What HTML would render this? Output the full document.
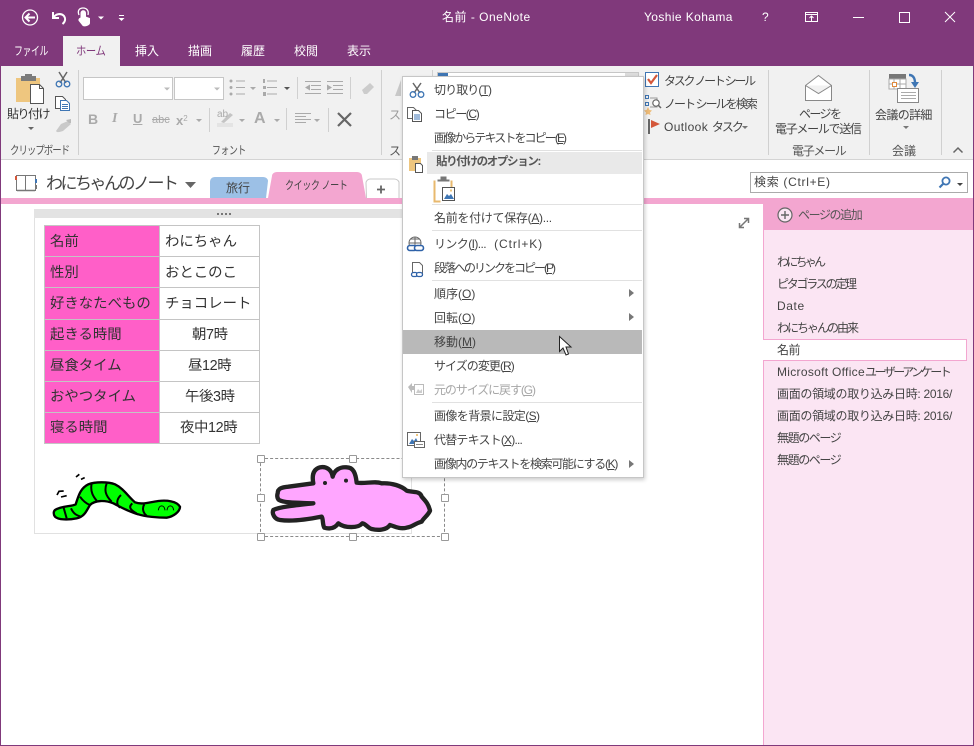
<!DOCTYPE html>
<html lang="ja"><head><meta charset="utf-8"><title>名前 - OneNote</title>
<style>
html,body{margin:0;padding:0;background:#fff}
#app{position:relative;width:974px;height:746px;overflow:hidden;background:#fff;font-family:"Liberation Sans","Noto Sans CJK JP",sans-serif;font-size:12px;color:#444}
.a{position:absolute}
.t{position:absolute;white-space:nowrap;line-height:16px;letter-spacing:-.5px}
.w{color:#fff}
.g{color:#9a9a9a}
.m{position:absolute;left:434px;white-space:nowrap;line-height:16px;color:#444;letter-spacing:-.6px}
.sep{position:absolute;left:432px;width:210px;height:1px;background:#e1e1e1}
.vs{position:absolute;top:70px;height:85px;width:1px;background:#d0d0d0}
.c{position:absolute;font-size:14.4px;line-height:20px;color:#333;white-space:nowrap}
.h{position:absolute;width:6px;height:6px;background:#fff;border:1px solid #999;border-radius:1px}
.p{position:absolute;left:777px;white-space:nowrap;line-height:16px;color:#444;letter-spacing:-.55px}
.sx{transform-origin:0 50%}
svg{position:absolute;overflow:visible}
u{text-decoration:underline}
</style></head><body><div id="app">

<!-- title bar -->
<div class="a" style="left:0;top:0;width:974px;height:66px;background:#80397b"></div>
<div class="a" style="left:0;top:0;width:1px;height:746px;background:#80397b;z-index:5"></div>
<div class="a" style="left:973px;top:0;width:1px;height:746px;background:#80397b;z-index:5"></div>
<div class="a" style="left:0;top:745px;width:974px;height:1px;background:#80397b;z-index:5"></div>

<svg style="left:0;top:0" width="140" height="36" fill="none" stroke="#fff">
<circle cx="30" cy="17.5" r="7.5" stroke-width="1.3"/>
<path d="M35 17.500H26M29.500 13.500L25.500 17.500L29.500 21.500" stroke-width="2"/>
<path d="M53 12V18H59M53.500 17.500C56 13.500 61 13 64 16C66 19 65 22 62.500 24" stroke-width="2"/>
<path d="M81 18V13C81 10 85.500 10 85.500 13V17L89.500 18.500V23C89.500 25 85 26.500 83 25.500L79 20.500C78.500 19 80 18 81 18Z" fill="#fff" stroke-width="1"/>
<path d="M79 15C77 10 80 8 83 8C87 8 89 11 88 15" stroke-width="1.300"/>
<path d="M98 16.500h6l-3 3z" fill="#fff" stroke="none"/>
<path d="M119 15.500h5" stroke-width="1"/><path d="M118.500 18h6l-3 3z" fill="#fff" stroke="none"/>
</svg>

<div class="t w" style="left:442px;top:9px;letter-spacing:.5px">名前 - OneNote</div>
<div class="t w" style="left:644px;top:9px;letter-spacing:.4px">Yoshie Kohama</div>
<div class="t w" style="left:762px;top:9px;letter-spacing:0">?</div>
<svg style="left:800px;top:8px" width="170" height="20" fill="none" stroke="#fff">
<path d="M5.500 4.500h12v9h-12zM5.500 6.500h12M11.500 13v-5M9.500 10l2-2 2 2"/>
<path d="M53 9.500h11"/>
<path d="M99.500 4.500h10v10h-10z"/>
<path d="M145 4l10 10M155 4l-10 10"/>
</svg>

<!-- tabs -->
<div class="a" style="left:63px;top:36px;width:57px;height:30px;background:#f1f1f1"></div>
<div class="t w sx" style="left:14px;top:43px;transform:scaleX(.74)">ファイル</div>
<div class="t sx" style="left:76px;top:43px;color:#80397b;transform:scaleX(.86)">ホーム</div>
<div class="t w" style="left:135px;top:43px;letter-spacing:0">挿入</div>
<div class="t w" style="left:188px;top:43px;letter-spacing:0">描画</div>
<div class="t w" style="left:241px;top:43px;letter-spacing:0">履歴</div>
<div class="t w" style="left:294px;top:43px;letter-spacing:0">校閲</div>
<div class="t w" style="left:347px;top:43px;letter-spacing:0">表示</div>

<!-- ribbon -->
<div class="a" style="left:0;top:66px;width:974px;height:93px;background:#f1f1f1"></div>
<div class="a" style="left:0;top:159px;width:974px;height:1px;background:#d4d4d4"></div>
<div class="vs" style="left:78px"></div>
<div class="vs" style="left:381px"></div>
<div class="vs" style="left:768px"></div>
<div class="vs" style="left:869px"></div>
<div class="vs" style="left:941px"></div>
<div class="vs" style="left:432px"></div>

<svg style="left:0;top:66px" width="400" height="94">
<!-- paste -->
<rect x="16" y="12" width="24" height="24" fill="#eec67f"/>
<rect x="21" y="10" width="15" height="5" fill="#7b7b7b"/>
<rect x="25" y="8" width="7" height="3" fill="#7b7b7b"/>
<path d="M30.500 18.500h9l4 4v15h-13z" fill="#fff" stroke="#555"/>
<path d="M39.500 18.500v4h4" fill="none" stroke="#555"/>
<path d="M28 61h6l-3 3z" fill="#666"/>
<!-- scissors -->
<g fill="none">
<path d="M59 6l7 11M67 6l-7 11" stroke="#666" stroke-width="1.500"/>
<circle cx="59" cy="18" r="2.800" stroke="#3f76b4" stroke-width="1.300"/>
<circle cx="67" cy="18" r="2.800" stroke="#3f76b4" stroke-width="1.300"/>
<!-- copy -->
<path d="M55.500 30.500h7l3 3v9h-10z" fill="#fff" stroke="#555"/>
<path d="M60.500 34.500h6l3 3v7h-9z" fill="#fff" stroke="#3f76b4"/>
<path d="M62 38.500h6M62 40.500h6M62 42.500h6" stroke="#3f76b4"/>
</g>
<!-- brush -->
<path d="M68 55l3 3-8 7c-3 1-6 2-7 0l5-7z" fill="#c9c9c9"/><path d="M66 54l5-1 0 4-2 0z" fill="#bbb"/>
<!-- font combos -->
<rect x="83.500" y="11.500" width="89" height="22" fill="#fff" stroke="#c6c6c6"/>
<rect x="174.500" y="11.500" width="49" height="22" fill="#fff" stroke="#c6c6c6"/>
<path d="M164 21.500h6l-3 3zM214 21.500h6l-3 3z" fill="#bbb"/>
<!-- lists -->
<g fill="#aaa">
<circle cx="231" cy="15" r="1.500"/><circle cx="231" cy="21.500" r="1.500"/><circle cx="231" cy="28" r="1.500"/>
<rect x="236" y="14.500" width="9" height="1"/><rect x="236" y="21" width="9" height="1"/><rect x="236" y="27.500" width="9" height="1"/>
<path d="M250 21h6l-3 3z"/>
<rect x="267" y="14.500" width="10" height="1"/><rect x="267" y="21" width="10" height="1"/><rect x="267" y="27.500" width="10" height="1"/>
<rect x="263" y="13" width="2" height="4"/><rect x="263" y="20" width="3" height="3"/><rect x="263" y="26" width="3" height="4"/>
<path d="M284 21h6l-3 3z" fill="#555"/>
<rect x="297" y="11" width="1" height="22" fill="#d0d0d0"/>
<rect x="350" y="11" width="1" height="22" fill="#d0d0d0"/>
<rect x="305" y="15" width="16" height="1"/><rect x="311" y="19" width="10" height="1"/><rect x="311" y="23" width="10" height="1"/><rect x="305" y="27" width="16" height="1"/>
<path d="M305 21.500l5-3v6z"/>
<rect x="327" y="15" width="16" height="1"/><rect x="333" y="19" width="10" height="1"/><rect x="333" y="23" width="10" height="1"/><rect x="327" y="27" width="16" height="1"/>
<path d="M332 21.500l-5-3v6z"/>
<path d="M362 24l8-7 4 4-7 7h-3z" fill="#ccc"/>
<rect x="209" y="42" width="1" height="24" fill="#d0d0d0"/>
<rect x="286" y="42" width="1" height="22" fill="#d0d0d0"/>
<path d="M196 53h6l-3 3zM239 53h6l-3 3zM274 53h6l-3 3zM314 53h6l-3 3z"/>
<rect x="295" y="47" width="16" height="1"/><rect x="295" y="50" width="11" height="1"/><rect x="295" y="53" width="16" height="1"/><rect x="295" y="56" width="11" height="1"/>
<rect x="217" y="57" width="16" height="4" fill="#e4e4e4"/>
</g>
<path d="M221 56l9-9 3 2-9 8z" fill="#c4c4c4"/>
<path d="M338 47l13 13M351 47l-13 13" stroke="#666" stroke-width="2.200" fill="none"/>
<rect x="328" y="42" width="1" height="24" fill="#d0d0d0"/>
<path d="M401 14l-6 16h6z" fill="#c8c8c8"/>
</svg>
<div class="t" style="left:7px;top:106px;color:#333;letter-spacing:-1.500px">貼り付け</div>
<div class="t sx" style="left:10px;top:143px;font-size:11.500px;letter-spacing:-1.200px;color:#555;transform:scaleX(.82)">クリップボード</div>
<div class="t sx" style="left:212px;top:143px;font-size:11.500px;color:#555;transform:scaleX(.77)">フォント</div>
<div class="t" style="left:389px;top:143px;color:#555">ス</div>
<div class="t g" style="left:389px;top:107px;font-size:12px">ス</div>

<div class="t" style="left:88px;top:111px;font-size:14px;font-weight:bold;color:#aaa;letter-spacing:0">B</div>
<div class="t" style="left:112px;top:111px;font-size:14px;font-style:italic;font-family:'Liberation Serif',serif;font-weight:bold;color:#aaa;letter-spacing:0">I</div>
<div class="t" style="left:133px;top:111px;font-size:13px;font-weight:bold;color:#aaa;text-decoration:underline;letter-spacing:0">U</div>
<div class="t" style="left:152px;top:112px;font-size:11px;color:#aaa;text-decoration:line-through;letter-spacing:0">abc</div>
<div class="t" style="left:176px;top:111px;font-size:13px;font-weight:bold;color:#aaa;letter-spacing:0">x<span style="font-size:8px;vertical-align:4px;font-weight:normal">2</span></div>
<div class="t" style="left:217px;top:107px;font-size:10px;color:#aaa;letter-spacing:0">ab</div>
<div class="t" style="left:254px;top:111px;font-size:16px;font-weight:bold;color:#aaa;letter-spacing:0">A</div>

<!-- tags group -->
<svg style="left:640px;top:66px" width="30" height="74" fill="none">
<rect x="5.500" y="6.500" width="13" height="14" stroke="#3f76b4" fill="#fff"/>
<path d="M8 13l3 4 6-8" stroke="#d4573a" stroke-width="2.200"/>
<path d="M5.500 29.500h3v3h-3zM5.500 36.500h3v3h-3z" stroke="#3f76b4"/>
<path d="M8 47l1.500-3 1.500 3 2.500.5-2 2 .5 2.500-2.500-1-2.500 1 .5-2.500-2-2z" fill="#eebb77" transform="translate(-1.500 -3)"/>
<path d="M10 32h7v9h-7" stroke="#999"/>
<circle cx="16" cy="37" r="3.200" stroke="#666" stroke-width="1.200" fill="#fff"/>
<path d="M18.500 39.500l2.500 2.500" stroke="#666" stroke-width="1.500"/>
<rect x="8" y="53" width="2" height="15" fill="#666"/>
<path d="M11 54l9 4-9 4z" fill="#d4573a"/>
</svg>
<div class="t" style="left:664px;top:73px;letter-spacing:-2.250px">タスク ノート シール</div>
<div class="t" style="left:664px;top:96px;letter-spacing:-1.950px">ノート シールを検索</div>
<div class="t" style="left:664px;top:119px;letter-spacing:.4px">Outlook <span style="letter-spacing:-2px">タスク</span></div>
<svg style="left:741px;top:125px" width="8" height="6"><path d="M1 1h6l-3 3z" fill="#777"/></svg>

<!-- email -->
<svg style="left:800px;top:70px" width="40" height="40" fill="none" stroke="#888">
<path d="M5.500 15.500L18.500 5.500L31.500 15.500V30.500H5.500Z" fill="#fff"/>
<path d="M5.500 15.500L18.500 23.500L31.500 15.500" fill="#f1f1f1"/>
</svg>
<div class="t" style="left:799px;top:106px;letter-spacing:-1.600px">ページを</div>
<div class="t" style="left:775px;top:121px;letter-spacing:-1.300px">電子メールで送信</div>
<div class="t" style="left:792px;top:143px;font-size:12px;letter-spacing:-1.300px;color:#555">電子メール</div>

<!-- meeting -->
<svg style="left:885px;top:70px" width="50" height="46" fill="none">
<rect x="4" y="4" width="17" height="5" fill="#777"/>
<rect x="4" y="9" width="17" height="10" fill="#fff" stroke="#aaa"/>
<path d="M4 14h17M9 9v10M15 9v10" stroke="#aaa"/>
<rect x="7.500" y="12.500" width="4" height="4" stroke="#e08a3c" fill="#fff"/>
<rect x="12.500" y="18.500" width="21" height="14" fill="#fff" stroke="#888"/>
<path d="M16 22.500h15M16 25.500h15M16 28.500h15" stroke="#aaa"/>
<path d="M24 5c4 0 6 3 6 8" stroke="#3f76b4" stroke-width="2.400"/>
<path d="M26 12h8l-4 6z" fill="#3f76b4"/>
</svg>
<div class="t" style="left:875px;top:107px;letter-spacing:-.65px">会議の詳細</div>
<svg style="left:902px;top:126px" width="10" height="6"><path d="M1 0h6l-3 3z" fill="#777"/></svg>
<div class="t" style="left:892px;top:143px;letter-spacing:0;color:#555">会議</div>
<svg style="left:952px;top:146px" width="14" height="8" fill="none"><path d="M1.500 6.500L6 2l4.500 4.500" stroke="#666" stroke-width="1.500"/></svg>

<!-- notebook bar -->
<svg style="left:14px;top:172px" width="26" height="22" fill="none">
<path d="M2.500 3.500h9v15h-9zM11.500 3.500h10v15h-10z" stroke="#777"/>
<path d="M3 18.500h18" stroke="#777" stroke-width="1.500"/>
<rect x="1" y="4" width="2" height="4" fill="#d4573a"/>
<rect x="21" y="7" width="2" height="4" fill="#3f76b4"/>
<rect x="21" y="13" width="2" height="4" fill="#777"/>
</svg>
<div class="t" style="left:46px;top:172px;font-size:17px;line-height:24px;letter-spacing:-2.500px;color:#444">わにちゃんのノート</div>
<svg style="left:184px;top:181px" width="14" height="9"><path d="M1 1h11l-5.500 6z" fill="#666"/></svg>

<!-- section tabs -->
<svg style="left:205px;top:168px" width="200" height="32">
<path d="M5 30V14c0-3 2-5 5-5h48c3 0 5 2 5 4l-2 17z" fill="#9cc0e6"/>
<path d="M63 30L67 8c0-2 2-4 5-4h80c3 0 5 2 5 4l4 22z" fill="#f3a6d0"/>
<path d="M161.500 30l-.5-15c0-2 2-4 4-4h24c2 0 4 1 5 3v16" fill="#fff" stroke="#c8c8c8"/>
</svg>
<div class="t" style="left:226px;top:180px;letter-spacing:0">旅行</div>
<div class="t sx" style="left:285px;top:178px;font-size:11.500px;letter-spacing:-.6px;transform:scaleX(.79)">クイック ノート</div>
<svg style="left:376px;top:184px" width="12" height="12" fill="none"><path d="M1 5.500h8M5 1.500v8" stroke="#666" stroke-width="1.800"/></svg>

<!-- search -->
<div class="a" style="left:750px;top:172px;width:216px;height:19px;border:1px solid #ababab;background:#fff"></div>
<div class="t" style="left:754px;top:174px;letter-spacing:.7px">検索 (Ctrl+E)</div>
<svg style="left:936px;top:174px" width="30" height="18" fill="none">
<circle cx="10" cy="7" r="3.600" stroke="#3f76b4" stroke-width="1.800"/>
<path d="M7.500 9.500L3.500 13.500" stroke="#3f76b4" stroke-width="2.200"/>
<path d="M21 9h6l-3 3z" fill="#444"/>
</svg>

<!-- pink band -->
<div class="a" style="left:0;top:198px;width:974px;height:6px;background:#f3a6d0"></div>

<!-- page area -->
<div class="a" style="left:34px;top:209px;width:378px;height:325px;border:1px solid #e1e1e1;box-sizing:border-box"></div>
<div class="a" style="left:34px;top:209px;width:378px;height:9px;background:#e3e3e3"></div>
<div class="a" style="left:217px;top:213px;width:14px;height:2px;background:repeating-linear-gradient(90deg,#777 0 2px,transparent 2px 4px)"></div>
<svg style="left:738px;top:217px" width="12" height="12" fill="none" stroke="#777" stroke-width="1.500">
<path d="M2 10L10 2M6 1.500H10.500V6M1.500 6V10.500H6"/>
</svg>

<!-- table -->
<svg style="left:44px;top:225px" width="216" height="219" shape-rendering="crispEdges">
<rect x="1" y="1" width="114" height="217" fill="#ff5fc8"/>
<g stroke="#c4c4c4" fill="none">
<path d="M.5 0V219M115.500 0V219M215.500 0V219"/>
<path d="M0 .5H216M0 31.500H216M0 62.500H216M0 94.500H216M0 125.500H216M0 156.500H216M0 187.500H216M0 218.500H216"/>
</g>
</svg>
<div class="c" style="left:50px;top:232px">名前</div><div class="c" style="left:165px;top:232px">わにちゃん</div>
<div class="c" style="left:50px;top:263px">性別</div><div class="c" style="left:165px;top:263px">おとこのこ</div>
<div class="c" style="left:50px;top:294px">好きなたべもの</div><div class="c" style="left:165px;top:294px">チョコレート</div>
<div class="c" style="left:50px;top:325px">起きる時間</div><div class="c" style="left:192px;top:325px;letter-spacing:-.4px">朝7時</div>
<div class="c" style="left:50px;top:356px">昼食タイム</div><div class="c" style="left:188px;top:356px;letter-spacing:-.4px">昼12時</div>
<div class="c" style="left:50px;top:387px">おやつタイム</div><div class="c" style="left:185px;top:387px;letter-spacing:-.4px">午後3時</div>
<div class="c" style="left:50px;top:418px">寝る時間</div><div class="c" style="left:180px;top:418px;letter-spacing:-.4px">夜中12時</div>

<!-- selection -->
<div class="a" style="left:260px;top:458px;width:185px;height:79px;border:1px dashed #8a8a8a;box-sizing:border-box"></div>
<div class="h" style="left:257px;top:455px"></div><div class="h" style="left:349px;top:455px"></div><div class="h" style="left:441px;top:455px"></div>
<div class="h" style="left:257px;top:494px"></div><div class="h" style="left:441px;top:494px"></div>
<div class="h" style="left:257px;top:533px"></div><div class="h" style="left:349px;top:533px"></div><div class="h" style="left:441px;top:533px"></div>

<!-- worm -->
<svg style="left:45px;top:465px" width="145" height="60" viewBox="0 0 435 180">
<path d="M30 135C50 122 80 125 92 118C100 95 105 70 130 58C150 50 190 50 210 58C235 70 250 95 270 112C290 120 310 112 340 108C365 105 395 108 405 125C405 140 385 155 365 158C340 158 300 155 280 148C250 140 225 125 205 115C180 105 150 105 135 120C125 135 120 155 95 160C70 165 40 165 30 155C25 148 25 140 30 135Z" fill="#00ff00" stroke="#000" stroke-width="7" stroke-linejoin="round"/>
<path d="M55 125L65 160M78 130C85 145 92 150 108 155M105 95C112 105 122 115 135 120M140 55C135 80 145 95 155 107M185 55C178 75 180 90 200 110M228 90C212 105 215 120 225 128M262 115C250 125 255 135 275 145M298 118C290 130 295 145 305 152" fill="none" stroke="#000" stroke-width="6"/>
<path d="M340 136C342 118 358 118 360 136M366 136C368 118 384 118 386 136" fill="none" stroke="#000" stroke-width="3"/>
<path d="M93 36L103 28M108 43L119 38M36 90L42 79L56 78M48 96L65 92" fill="none" stroke="#000" stroke-width="5"/>
</svg>
<!-- crocodile -->
<svg style="left:265px;top:460px" width="175" height="75" viewBox="0 0 525 225">
<path d="M38 100C38 85 50 82 70 80L145 70C140 45 145 28 165 22C185 18 200 30 203 50C208 30 225 20 245 22C265 22 272 40 275 68C300 72 330 62 350 70C380 68 410 78 425 92C445 98 465 92 470 110C480 122 490 130 495 152C490 165 475 175 470 185C450 190 445 200 425 203C405 208 390 200 375 195C365 210 340 212 320 207C310 205 300 190 292 190C280 205 240 205 220 190C210 205 195 208 178 203C172 195 175 175 170 170C130 178 80 185 45 180C28 178 20 160 25 150C45 140 100 135 145 130C110 128 60 130 42 120C36 115 36 105 38 100Z" fill="#ffa6ff" stroke="#222" stroke-width="13" stroke-linejoin="round"/>
<circle cx="180" cy="69" r="6" fill="#222"/><circle cx="243" cy="62" r="6" fill="#222"/>
</svg>

<!-- sidebar -->
<div class="a" style="left:763px;top:204px;width:210px;height:541px;background:#fbe5f3;border-left:1px solid #f3a6d0;box-sizing:border-box"></div>
<div class="a" style="left:763px;top:198px;width:210px;height:32px;background:#f3a6d0"></div>
<svg style="left:776px;top:206px" width="18" height="18" fill="none">
<circle cx="9" cy="9" r="7" fill="#fbe5f3" stroke="#666" stroke-width="1.200"/>
<path d="M5 9h8M9 5v8" stroke="#666" stroke-width="1.400"/>
</svg>
<div class="t" style="left:798px;top:207px;color:#555;letter-spacing:-1.400px">ページの追加</div>
<div class="a" style="left:763px;top:339px;width:204px;height:22px;background:#fff;border:1px solid #f3a6d0;border-left:none;box-sizing:border-box"></div>
<div class="p" style="top:254px;letter-spacing:-2.750px">わにちゃん</div>
<div class="p" style="top:276px;letter-spacing:-2.250px">ピタゴラスの定理</div>
<div class="p" style="top:298px;letter-spacing:.6px">Date</div>
<div class="p" style="top:320px;letter-spacing:-2px">わにちゃんの由来</div>
<div class="p" style="top:342px">名前</div>
<div class="p" style="top:364px;letter-spacing:.3px">Microsoft Office<span style="letter-spacing:-2.500px">ユーザーアンケート</span></div>
<div class="p" style="top:386px;letter-spacing:-.3px">画面の領域の取り込み日時: 2016/</div>
<div class="p" style="top:408px;letter-spacing:-.3px">画面の領域の取り込み日時: 2016/</div>
<div class="p" style="top:430px;letter-spacing:-1.400px">無題のページ</div>
<div class="p" style="top:452px;letter-spacing:-1.400px">無題のページ</div>

<!-- ribbon controls behind the menu -->
<div class="a" style="left:437px;top:72px;width:202px;height:5px;background:#fff;border:1px solid #c6c6c6;box-sizing:border-box"></div>
<div class="a" style="left:438px;top:73px;width:10px;height:4px;background:#3f76b4"></div>
<div class="a" style="left:625px;top:73px;width:13px;height:4px;background:#dcdcdc"></div>

<!-- context menu -->
<div class="a" style="left:402px;top:76px;width:242px;height:402px;background:#fff;border:1px solid #c6c6c6;box-sizing:border-box;box-shadow:1px 2px 4px rgba(0,0,0,.2)"></div>
<div class="a" style="left:427px;top:152px;width:215px;height:22px;background:#e9e9e9"></div>
<div class="a" style="left:403px;top:330px;width:239px;height:24px;background:#b9b9b9"></div>
<div class="sep" style="top:150px"></div>
<div class="sep" style="top:204px"></div>
<div class="sep" style="top:230px"></div>
<div class="sep" style="top:280px"></div>
<div class="sep" style="top:402px"></div>

<div class="m" style="top:82px;letter-spacing:-.9px">切り取り(<u>T</u>)</div>
<div class="m" style="top:106px;letter-spacing:-1.400px">コピー(<u>C</u>)</div>
<div class="m" style="top:130px;letter-spacing:-1.900px">画像からテキストをコピー(<u>E</u>)</div>
<div class="m" style="top:154px;left:436px;font-weight:bold;color:#555;font-size:11.500px;letter-spacing:-1.350px">貼り付けのオプション:</div>
<div class="m" style="top:210px;letter-spacing:-.3px">名前を付けて保存(<u>A</u>)...</div>
<div class="m" style="top:236px">リンク(<u>I</u>)...&nbsp;&nbsp;&nbsp;<span style="letter-spacing:.9px">(Ctrl+K)</span></div>
<div class="m" style="top:260px;letter-spacing:-2px">段落へのリンクをコピー(<u>P</u>)</div>
<div class="m" style="top:286px;letter-spacing:0">順序(<u>O</u>)</div>
<div class="m" style="top:310px;letter-spacing:0">回転(<u>O</u>)</div>
<div class="m" style="top:334px;letter-spacing:0">移動(<u>M</u>)</div>
<div class="m" style="top:358px;letter-spacing:-.95px">サイズの変更(<u>R</u>)</div>
<div class="m" style="top:382px;color:#a6a6a6;letter-spacing:-1.100px">元のサイズに戻す(<u>G</u>)</div>
<div class="m" style="top:408px">画像を背景に設定(<u>S</u>)</div>
<div class="m" style="top:432px;letter-spacing:-.8px">代替テキスト(<u>X</u>)...</div>
<div class="m" style="top:456px;letter-spacing:-1.300px">画像内のテキストを検索可能にする(<u>K</u>)</div>

<svg style="left:402px;top:76px" width="242" height="402" fill="none">
<!-- arrows -->
<path d="M227 213l5 4-5 4zM227 237l5 4-5 4zM227 384l5 4-5 4z" fill="#777"/>
<!-- cut -->
<path d="M11 7l7 10M19 7l-7 10" stroke="#666" stroke-width="1.500"/>
<circle cx="11" cy="18.500" r="2.800" stroke="#3f76b4" stroke-width="1.300"/>
<circle cx="19" cy="18.500" r="2.800" stroke="#3f76b4" stroke-width="1.300"/>
<!-- copy -->
<path d="M5.500 31.500h6l3 3v8h-9z" fill="#fff" stroke="#666"/>
<path d="M10.500 34.500h6l3 3v8h-9z" fill="#fff" stroke="#555"/>
<path d="M12 39h6M12 41h6M12 43h6" stroke="#3f76b4"/>
<!-- paste -->
<rect x="7" y="82" width="12" height="13" fill="#eec67f"/>
<rect x="10" y="80" width="6" height="4" fill="#777"/>
<path d="M13.500 87.500h5l2 2v7h-7z" fill="#fff" stroke="#555"/>
<!-- paste picture -->
<path d="M32.500 104.500v21h6" stroke="#e8b96e" stroke-width="2"/>
<path d="M36 104h11v1H36zM39 101h5v3h-5z" fill="#777" stroke="#777"/>
<path d="M49.500 104.500v8" stroke="#e8b96e" stroke-width="2"/>
<rect x="40.500" y="111.500" width="12" height="13" fill="#fff" stroke="#555"/>
<path d="M42 123l3-5 2 2 2-2 3 5z" fill="#3f76b4"/>
<rect x="48" y="113.500" width="2" height="2" fill="#eec67f"/>
<!-- link -->
<circle cx="13" cy="167" r="6" stroke="#666"/>
<path d="M7 167h12M13 161v12M9 163h8" stroke="#666"/>
<rect x="5.500" y="169.500" width="9" height="5" rx="2.500" fill="#fff" stroke="#2f62a8" stroke-width="1.600"/>
<rect x="12.500" y="169.500" width="9" height="5" rx="2.500" fill="#fff" stroke="#2f62a8" stroke-width="1.600"/>
<!-- para link -->
<path d="M11.500 186.500h6l3 3v10h-10v-13z" fill="#fff" stroke="#666"/>
<rect x="9.500" y="196.500" width="6" height="4" rx="2" fill="#fff" stroke="#2f62a8" stroke-width="1.300"/>
<rect x="14.500" y="196.500" width="6" height="4" rx="2" fill="#fff" stroke="#2f62a8" stroke-width="1.300"/>
<!-- restore -->
<path d="M6 311l4-4v3h6v4h-6v3z" fill="#bbb"/>
<rect x="12.500" y="308.500" width="9" height="10" fill="#fff" stroke="#bbb"/>
<path d="M14 317l2-4 2 2 2-2v4z" fill="#ccc"/>
<!-- alt -->
<rect x="5.500" y="356.500" width="13" height="13" fill="#fff" stroke="#666"/>
<path d="M7 368l3-5 2 2 2-3 3 6z" fill="#3f76b4"/>
<rect x="14" y="358" width="2" height="2" fill="#eec67f"/>
<rect x="12.500" y="365.500" width="10" height="6" fill="#fff" stroke="#666"/>
<path d="M14 368.500h7" stroke="#888"/>
<!-- cursor -->
<path d="M157.500 260.500V275.500L161 272L164 279L166.500 278L164 271H169Z" fill="#fff" stroke="#222"/>
</svg>

</div></body></html>
